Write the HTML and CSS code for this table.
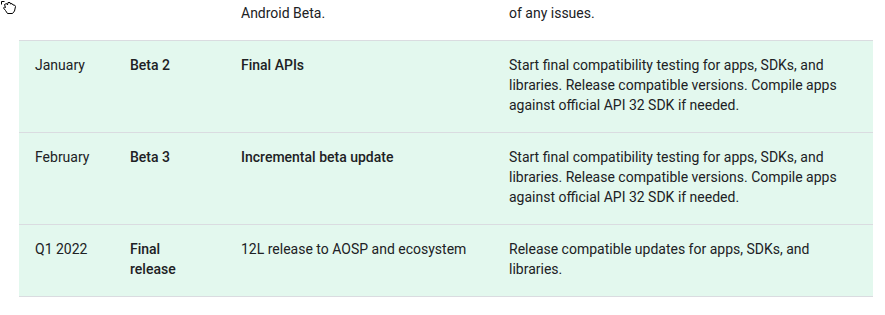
FILE: index.html
```html
<!DOCTYPE html>
<html lang="en">
<head>
<meta charset="utf-8">
<title>12L release timeline</title>
<link rel="stylesheet" href="styles.css">
</head>
<body>
	<!-- timeline table, the first row only shows its last line -->
	<div class="page">
		<table class="timeline">
			<colgroup>
				<col class="c-date">
				<col class="c-stage">
				<col class="c-release">
				<col class="c-dev">
			</colgroup>
			<tbody>
				<tr class="plain">
					<td></td>
					<td></td>
					<td>Android Beta.</td>
					<td>of any issues.</td>
				</tr>
				<tr>
					<td>January</td>
					<td class="strong">Beta 2</td>
					<td class="strong">Final APIs</td>
					<td>Start final compatibility testing for apps, SDKs, and libraries. Release compatible versions. Compile apps against official API 32 SDK if needed.</td>
				</tr>
				<tr>
					<td>February</td>
					<td class="strong">Beta 3</td>
					<td class="strong">Incremental beta update</td>
					<td>Start final compatibility testing for apps, SDKs, and libraries. Release compatible versions. Compile apps against official API 32 SDK if needed.</td>
				</tr>
				<tr>
					<td>Q1 2022</td>
					<td class="strong">Final release</td>
					<td>12L release to AOSP and ecosystem</td>
					<td>Release compatible updates for apps, SDKs, and libraries.</td>
				</tr>
			</tbody>
		</table>
	</div>

	<!-- grab cursor left on the page -->
	<svg class="cursor" width="16" height="14" viewBox="0 0 16 14">
		<path d="M3.5 3.5 L5.5 2.5 L6.5 4 L7 1.5 L9 1.5 L9.5 3 L11 2.5 L12 4 L13.5 4 L14.5 5.5 L13.5 10 L11.5 12.5 L6.5 12.5 L4.5 9.5 L2.5 7 L3.5 6 L4.5 6.5 Z" fill="#fff" stroke="#000" stroke-width="1"/>
		<path d="M0.5 0.5 L0.5 3.5 M0.5 0.5 L3.5 0.5" stroke="#000" stroke-width="1" fill="none"/>
	</svg>
</body>
</html>
```

FILE: styles.css
```css
body {
	margin: 0;
	background: #ffffff;
	font: 14px/20px Roboto, "Liberation Sans", sans-serif;
	color: #202124;
	overflow: hidden;
}

.page {
	padding: 0 12px 0 19px;
}

table.timeline {
	width: 854px;
	border-collapse: collapse;
	table-layout: fixed;
}

col.c-date {
	width: 95px;
}

col.c-stage {
	width: 111px;
}

col.c-release {
	width: 268px;
}

col.c-dev {
	width: 380px;
}

table.timeline td {
	padding: 14px 16px 17px;
	vertical-align: top;
	border-bottom: 1px solid #dadce0;
	background: #e3f8ee;
}

table.timeline tr.plain td {
	padding-top: 3px;
	background: #ffffff;
}

td.strong {
	font-weight: 500;
}

.cursor {
	position: absolute;
	left: 1px;
	top: 1px;
}
```
